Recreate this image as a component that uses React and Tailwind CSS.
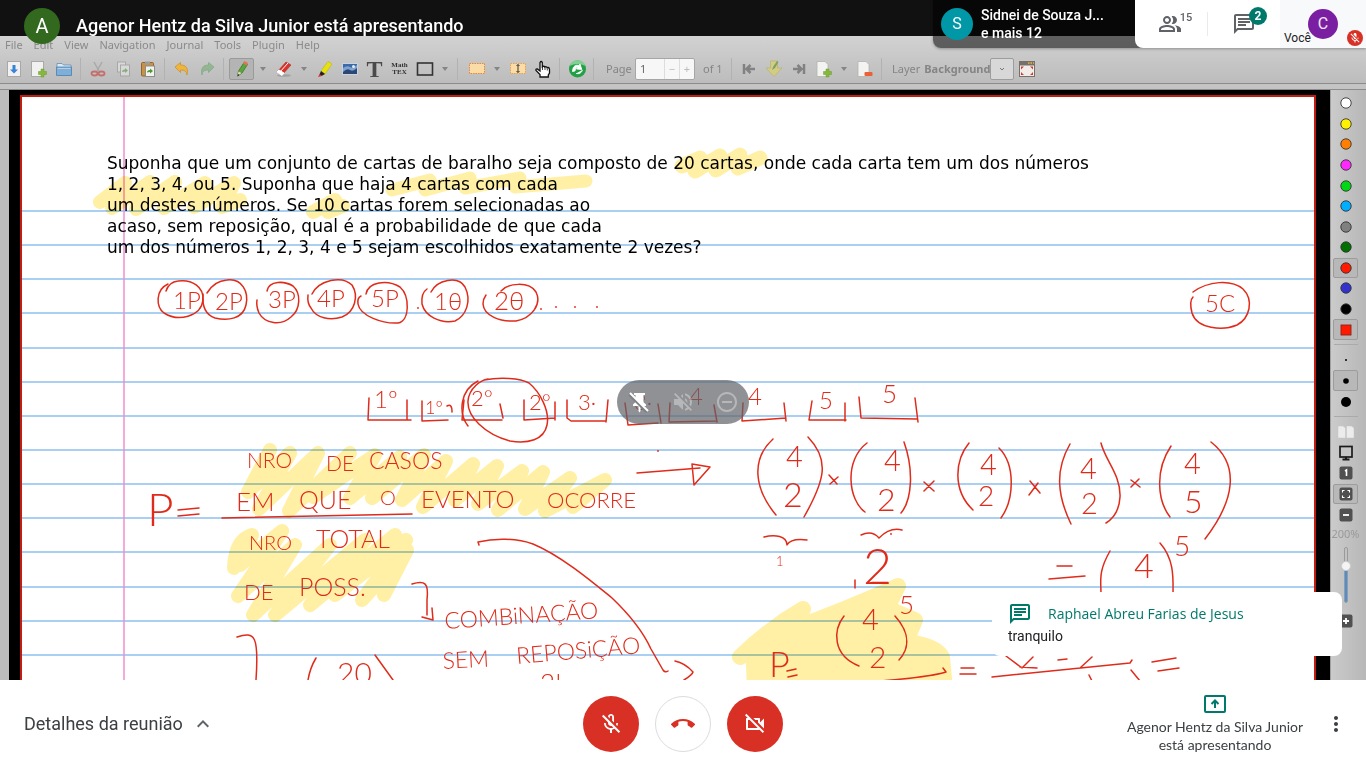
import React from "react";
import {
  MdOutlinePeopleAlt,
  MdOutlineChat,
  MdMicOff,
  MdOutlineMicOff,
  MdCallEnd,
  MdOutlineVideocamOff,
  MdMoreVert,
  MdExpandLess,
  MdVolumeOff,
  MdRemoveCircleOutline,
} from "react-icons/md";

/* ---------- toolbar pieces ---------- */

const Tool = ({ label, active, dim, children }) => (
  <button
    type="button"
    aria-label={label}
    className={
      "flex shrink-0 items-center justify-center " +
      (active
        ? "mx-px h-[22px] w-[25px] rounded-xs border border-[#9a9a9a] bg-[#b4b4b4]"
        : "h-[22px] w-[25px]") +
      (dim ? " opacity-50" : "")
    }
  >
    <svg viewBox="0 0 16 16" className="h-4 w-4 shrink-0 overflow-visible" aria-hidden="true">
      {children}
    </svg>
  </button>
);

const Caret = () => (
  <button type="button" aria-label="More" className="flex w-4 shrink-0 justify-center">
    <svg viewBox="0 0 6 4" className="h-1 w-1.5" aria-hidden="true">
      <path d="M0 0h6L3 4z" fill="#858585" />
    </svg>
  </button>
);

const Sep = () => <span className="mx-1 h-[22px] w-px shrink-0 bg-[#b2b2b2]" />;

const Sheet = ({ x = 2 }) => (
  <path d={`M${x} 0.500h8l3 3v12h-11z`} fill="#f3f3f1" stroke="#b3b3ae" strokeWidth="0.8" />
);

const Plus = () => (
  <path d="M10 8h3v2.500h2.500v3H13V16h-3v-2.500H7.500v-3H10z" fill="#86b83c" stroke="#6d9c2c" strokeWidth="0.500" />
);

function Toolbar() {
  return (
    <div className="flex h-[26px] items-center pl-px text-[11px] text-[#858585]">
      <Tool label="Save">
        <rect x="1.500" y="0.500" width="13" height="15" fill="#f1f1f1" stroke="#a8a8a8" />
        <path d="M6.500 4h3v4.500H12L8 12.500 4 8.500h2.500z" fill="#3584d6" />
      </Tool>
      <Tool label="New">
        <rect x="0.500" y="0.500" width="12" height="15" fill="#f1f1f1" stroke="#a8a8a8" />
        <Plus />
      </Tool>
      <Tool label="Open">
        <path d="M1 14V2.500h5l1.500 1.500H15v10z" fill="#dfe9f2" stroke="#5f8db5" strokeWidth="0.800" />
        <path d="M0.500 6h15v8.500h-15z" fill="#7faed6" stroke="#4e82b3" strokeWidth="0.800" />
        <path d="M1.500 7.500h13" stroke="#b3d0e8" />
      </Tool>
      <Sep />
      <Tool label="Cut">
        <path d="M4 1l5 9M12 1L7 10" stroke="#a9a9a9" strokeWidth="1.500" />
        <ellipse cx="4.500" cy="12.500" rx="3" ry="2" fill="none" stroke="#c46e6e" strokeWidth="1.800" />
        <ellipse cx="11.500" cy="12.500" rx="3" ry="2" fill="none" stroke="#c46e6e" strokeWidth="1.800" />
      </Tool>
      <Tool label="Copy" dim>
        <rect x="2.500" y="1" width="8" height="10" fill="#eee" stroke="#8c8c8c" />
        <rect x="5.500" y="4" width="9" height="11" fill="#eee" stroke="#8c8c8c" />
        <path d="M7 11q0-2.500 3-2.500V7l3 2.500-3 2.500v-1.500q-2 0-3 .5z" fill="#4b9a2f" />
      </Tool>
      <Tool label="Paste">
        <rect x="1.500" y="1.500" width="12" height="13.500" rx="1" fill="#c99146" stroke="#8f6530" />
        <rect x="5" y="0.500" width="5" height="3" fill="#9c9c9c" />
        <rect x="5.500" y="5" width="9" height="10.500" fill="#f2f2f0" stroke="#8c8c8c" />
        <path d="M7 11.500q0-2.500 3-2.500V7.500l3 2.500-3 2.500V11q-2 0-3 .5z" fill="#4b9a2f" />
      </Tool>
      <Sep />
      <Tool label="Undo">
        <path d="M1 6l5.500-4.500V4C12 4 14.500 7 13 14c-.5-4-2.500-5-6.500-5v2.500z" fill="#f0b53c" stroke="#c98c1c" strokeWidth="0.700" />
      </Tool>
      <Tool label="Redo" dim>
        <path d="M15 6L9.500 1.500V4C4 4 1.500 7 3 14c.5-4 2.500-5 6.500-5v2.500z" fill="#62ad5f" stroke="#47854a" strokeWidth="0.700" />
      </Tool>
      <Sep />
      <Tool label="Pen" active>
        <path d="M3.500 15l1-5L10 1.500l3.500 2L8 12z" fill="#58a63c" stroke="#366f22" strokeWidth="0.700" />
        <path d="M9 2.500L10.500 0l3.500 2-1.200 2.500z" fill="#e2734f" />
        <path d="M3.500 15l1-4.500L7.500 12z" fill="#ecd9ac" />
        <path d="M3.500 15.500l.5-2.500 1.500 1z" fill="#222" />
      </Tool>
      <Caret />
      <Tool label="Eraser">
        <ellipse cx="8" cy="14.500" rx="7" ry="1.300" fill="#a2a2a2" />
        <path d="M1 11L10 1l5 3-9 10z" fill="#d9332b" stroke="#a3221c" strokeWidth="0.500" />
        <path d="M3.500 11.500L12 2M1 11l2-2 5 3-2 2.500z" fill="#fff" stroke="#fff" />
      </Tool>
      <Caret />
      <Tool label="Highlighter">
        <path d="M4 10L11 0.500l4 2.500-7 10z" fill="#e8e010" stroke="#b8b000" strokeWidth="0.500" />
        <path d="M2.500 13.500L4 10l4 3-3.500 2z" fill="#222" />
        <path d="M1 16l1.500-3 2.500 2z" fill="#d33" />
      </Tool>
      <Tool label="Image">
        <rect x="0.500" y="2.500" width="15" height="11" fill="#3c6aa8" stroke="#c7d3e2" />
        <path d="M1 7q4-3 7-1t7-2v9H1z" fill="#7ea3cf" />
        <path d="M1 11q4-4 7-2t7-2v6H1z" fill="#2b4874" />
        <circle cx="11.500" cy="5.500" r="1.500" fill="#e7eef7" />
      </Tool>
      <button type="button" aria-label="Text tool" className="w-[25px] text-center font-['Liberation_Serif',serif] text-2xl leading-none font-bold text-[#4a4a4a]">T</button>
      <button type="button" aria-label="Math TEX" className="flex w-[25px] flex-col items-center font-['Liberation_Serif',serif] text-[7px] leading-[7px] font-bold text-[#333]">
        <span>Math</span>
        <span>TEX</span>
      </button>
      <Tool label="Rectangle">
        <rect x="0.500" y="2" width="15" height="12" fill="none" stroke="#333" strokeWidth="1.600" />
      </Tool>
      <Caret />
      <Sep />
      <span className="w-0.5 shrink-0" />
      <Tool label="Select rectangle">
        <rect x="0.500" y="2.500" width="15" height="10" fill="#fbdca6" stroke="#e9882c" strokeDasharray="1.500 1" />
      </Tool>
      <Caret />
      <Tool label="Vertical space">
        <rect x="0.500" y="2.500" width="15" height="10" fill="#fbdca6" stroke="#e9a054" strokeDasharray="1.500 1" />
        <path d="M8 3.500v8M6.500 5L8 3.500 9.500 5M6.500 10L8 11.500 9.500 10" fill="none" stroke="#333" strokeWidth="1" />
      </Tool>
      <Tool label="Hand">
        <path d="M5 16v-2.500L1 9.500q-.5-1.700 1.300-1.500L5 10V1.500q1.200-2 2.300 0V6l1-.8q1-.3 1.500 1l1-.5q1.200 0 1.400 1.100l1-.3q1.300.3 1.300 2V12l-1.200 2v2z" fill="#fff" stroke="#111" strokeWidth="1.300" />
        <path d="M7.500 9V6M10 9V6.500M12.300 9.500V7.500" stroke="#111" strokeWidth="0.800" />
      </Tool>
      <Sep />
      <Tool label="Default tool">
        <circle cx="8.500" cy="8" r="8.500" fill="#21a045" />
        <path d="M0.500 5a8.500 8.500 0 0 1 16 0q-8-4-16 0z" fill="#80cf93" />
        <path d="M3.500 10.500C3.500 5 7 3.500 10 4.500L11 3l1.800 5.500-5.300-.5 1.300-1.700Q6.500 6 6 10zM13.500 9Q12 13.500 7 12.500" fill="#fff" stroke="#fff" strokeWidth="0.800" />
      </Tool>
      <Sep />
      <label htmlFor="page" className="w-[37px] shrink-0 pl-2">Page</label>
      <span className="flex h-[22px] w-[60px] shrink-0 items-center rounded-xs border border-[#a6a6a6] bg-[#f7f7f7]">
        <input id="page" defaultValue="1" className="w-7 bg-transparent pl-1 text-[#666] outline-none" />
        <button type="button" aria-label="Previous page" className="h-full flex-1 border-l border-[#ddd] text-[#bbb]">−</button>
        <button type="button" aria-label="Next page" className="h-full flex-1 border-l border-[#ddd] text-[#bbb]">+</button>
      </span>
      <span className="w-8 shrink-0 pl-2 whitespace-nowrap">of 1</span>
      <Sep />
      <Tool label="First page">
        <path d="M3 3v10M14 8H6M9.500 4L5.500 8l4 4" fill="none" stroke="#828282" strokeWidth="2.500" />
      </Tool>
      <Tool label="Annotated page">
        <path d="M4.500 0h7v7H16l-8 8.500L0 7h4.500z" fill="#d3cd84" stroke="#b9b36a" strokeWidth="0.700" />
        <path d="M6 9l1-3 4-6 1.500 1L9 7z" fill="#7da163" />
      </Tool>
      <Tool label="Last page">
        <path d="M13 3v10M2 8h8M6.500 4l4 4-4 4" fill="none" stroke="#828282" strokeWidth="2.500" />
      </Tool>
      <Tool label="Add page">
        <Sheet x={1} />
        <Plus />
      </Tool>
      <Caret />
      <Tool label="Delete page">
        <Sheet x={1} />
        <rect x="7.500" y="11" width="8" height="4" rx="1" fill="#ea6037" />
      </Tool>
      <Sep />
      <span className="pl-1.5">Layer</span>
      <span className="pl-1 font-bold">Background</span>
      <button type="button" aria-label="Choose layer" className="flex h-[22px] w-6 shrink-0 items-center justify-center rounded-xs border border-[#9d9d9d] bg-[#d8d8d8]">
        <svg viewBox="0 0 6 4" className="h-1 w-1.5" aria-hidden="true">
          <path d="M1 1l2 2 2-2" fill="none" stroke="#777" />
        </svg>
      </button>
      <Tool label="Fullscreen">
        <rect x="0" y="0" width="16" height="16" fill="#75706a" />
        <rect x="1" y="4.500" width="14" height="10.500" fill="#f2ece8" />
        <path d="M9 2h1.500M11.500 2H13M14 2h1" stroke="#e9b44c" strokeWidth="1.500" />
        <path d="M2 5.500h3l-3 3zM14 5.500h-3l3 3zM2 14v-3l3 3zM14 14v-3l-3 3z" fill="#cf3b33" />
      </Tool>
    </div>
  );
}

/* ---------- right palette ---------- */

const colors = [
  ["White", "#ffffff"], ["Yellow", "#fff200"], ["Orange", "#ff8000"], ["Magenta", "#ff28ff"],
  ["Light green", "#00d816"], ["Light blue", "#00aeff"], ["Gray", "#808080"], ["Green", "#007000"],
  ["Red", "#ff1a00"], ["Blue", "#3333cc"], ["Black", "#000000"],
];

const SideButton = ({ label, active, children }) => (
  <button
    type="button"
    aria-label={label}
    className={
      "flex w-[25px] flex-1 items-center justify-center rounded-xs border " +
      (active ? "border-[#9c9c9c] bg-[#b9b8b8]" : "border-transparent")
    }
  >
    <svg viewBox="0 0 16 16" className="h-4 w-4 shrink-0" aria-hidden="true">{children}</svg>
  </button>
);

const Tile = ({ children }) => (
  <>
    <rect x="1.500" y="1.500" width="13" height="13" rx="2" fill="#505050" />
    {children}
  </>
);

function Palette() {
  return (
    <aside className="flex w-9 shrink-0 flex-col items-center border-l border-[#a0a0a0] bg-linear-to-r from-[#cccbcb] to-[#b8b7b7] pt-[3px] pr-1.5">
      <div className="flex h-[247px] shrink-0 flex-col">
        {colors.map(([name, c]) => (
          <SideButton key={name} label={name} active={name === "Red"}>
            <circle cx="8" cy="8" r="5.200" fill={c} stroke="#333" strokeWidth="0.900" />
          </SideButton>
        ))}
        <SideButton label="Pick colour" active>
          <rect x="3" y="3" width="10" height="10" fill="#ff1a00" stroke="#8a2218" strokeWidth="0.900" />
        </SideButton>
      </div>
      <span className="my-1 h-px w-6 shrink-0 bg-[#aaa]" />
      <div className="flex h-[63px] shrink-0 flex-col">
        <SideButton label="Fine"><circle cx="8" cy="8" r="1" /></SideButton>
        <SideButton label="Medium" active><circle cx="8" cy="8" r="2.800" /></SideButton>
        <SideButton label="Thick"><circle cx="8" cy="8" r="5" /></SideButton>
      </div>
      <span className="my-1 h-px w-6 shrink-0 bg-[#aaa]" />
      <div className="mt-px flex h-[103px] shrink-0 flex-col">
        <SideButton label="Paired pages">
          <path d="M0 2h5l2.500 2v10H0zM8.500 2h5L16 4v10H8.500z" fill="#ececec" stroke="#c5c5c5" strokeWidth="0.500" />
        </SideButton>
        <SideButton label="Presentation">
          <rect x="2" y="1.500" width="12" height="10.500" fill="#c6c6c6" stroke="#1a1a1a" strokeWidth="1.700" />
          <path d="M4.500 14.500h7M8 12v3" stroke="#1a1a1a" strokeWidth="2" />
        </SideButton>
        <SideButton label="Zoom 100%"><Tile><path d="M7 6l1.500-1v6" fill="none" stroke="#fff" strokeWidth="1.600" /></Tile></SideButton>
        <SideButton label="Zoom fit" active>
          <Tile><path d="M4.500 6.500v-2h2M9.500 4.500h2v2M11.500 9.500v2h-2M6.500 11.500h-2v-2" fill="none" stroke="#fff" strokeWidth="1.100" /></Tile>
        </SideButton>
        <SideButton label="Zoom out"><Tile><path d="M5 8h6" stroke="#fff" strokeWidth="1.800" /></Tile></SideButton>
      </div>
      <span className="text-[11px] leading-[18px] text-[#9a9a9a]">200%</span>
      <label className="relative mt-1 flex h-14 w-5 shrink-0 justify-center">
        <span className="flex h-full w-1 flex-col overflow-hidden rounded-full border border-[#9a9a9a]">
          <span className="h-1/3" />
          <span className="flex-1 bg-[#4a90d9]" />
        </span>
        <span className="absolute top-3.5 h-2.5 w-2.5 rounded-full border border-[#ccc] bg-[#f4f4f4]" />
        <input type="range" aria-label="Zoom" defaultValue="66" className="absolute inset-0 h-full w-full opacity-0" />
      </label>
      <div className="mt-2 flex h-5 shrink-0 flex-col">
        <SideButton label="Zoom in"><Tile><path d="M5 8h6M8 5v6" stroke="#fff" strokeWidth="1.800" /></Tile></SideButton>
      </div>
    </aside>
  );
}

/* ---------- handwritten page ---------- */

const rules = [211, 245, 279, 313, 348, 382, 416, 450, 484, 518, 552, 587, 621, 655];

const words = [
  ["1P", 173, 309, 24], ["2P", 215, 310, 24], ["3P", 268, 308, 24], ["4P", 317, 307, 24], ["5P", 371, 307, 24],
  ["1θ", 434, 310, 24], ["2θ", 494, 310, 26], ["5C", 1205, 312, 24],
  ["1º", 374, 408, 24], ["1º", 425, 414, 18], ["2°", 471, 406, 22], ["2°", 529, 410, 22], ["3·", 578, 410, 22],
  ["3·", 634, 410, 22], ["4", 689, 405, 24], ["4", 748, 405, 24], ["5", 819, 409, 24], ["5", 882, 403, 26],
  ["P", 147, 526, 46],
  ["NRO", 247, 468, 21], ["DE", 326, 471, 21], ["CASOS", 369, 469, 23],
  ["EM", 236, 511, 26], ["QUE", 299, 509, 25], ["O", 380, 505, 20], ["EVENTO", 421, 508, 24], ["OCORRE", 547, 508, 22],
  ["NRO", 249, 550, 20], ["TOTAL", 316, 548, 25], ["DE", 244, 600, 22], ["POSS.", 299, 596, 25],
  ["20", 337, 684, 30], ["2!", 540, 692, 26],
  ["COMBiNAÇÃO", 445, 629, 23, -4], ["SEM", 443, 669, 23, -3], ["REPOSiÇÃO", 517, 664, 23, -5],
  ["4", 786, 467, 29], ["2", 783, 507, 34], ["4", 884, 471, 29], ["2", 877, 511, 32],
  ["4", 980, 475, 29], ["2", 978, 506, 28], ["4", 1080, 479, 29], ["2", 1081, 514, 29],
  ["4", 1184, 474, 29], ["5", 1184, 513, 32], ["4", 1134, 578, 34], ["5", 1174, 556, 28],
  ["1", 776, 566, 13], ["2", 863, 584, 50], ["4", 862, 630, 29], ["2", 869, 668, 30], ["5", 899, 614, 26], ["P", 769, 677, 36],
];

const strokes = [
  "M168 284C155 290 156 307 164 313C178 322 201 317 203 300C204 287 192 279 178 281Q169 282 166 291",
  "M207 293Q214 281 227 280C242 278 249 292 246 305C243 319 228 321 215 318C206 315 202 306 203 294",
  "M267 291C269 280 285 281 293 286C301 293 301 309 291 317C281 326 265 324 259 313Q256 306 257 300",
  "M312 294C319 280 342 275 352 285C359 296 355 312 342 317C330 321 316 318 311 308Q307 303 308 295",
  "M366 294C368 282 387 279 400 287C410 296 410 321 398 323C383 324 360 316 358 304Q357 298 361 296",
  "M431 292C437 280 458 275 465 287C472 301 466 316 455 321C440 324 425 316 422 304Q421 293 427 289",
  "M501 291C508 283 529 281 536 292C542 304 532 318 516 321C500 322 484 316 483 304Q483 299 486 295",
  "M1193 292C1208 281 1231 279 1243 289C1254 300 1250 318 1237 325C1223 331 1197 329 1192 313Q1189 301 1193 297",
  "M369 398L368 420L411 420M407 400V420M422 401V421L448 420M447 406Q452 403 452 412",
  "M478 381C460 390 458 413 468 426M484 380C500 377 520 378 529 383C540 392 550 411 547 425C544 440 528 444 510 441C484 434 467 416 468 401C469 388 481 380 488 379",
  "M464 400L462 420L502 420M500 404L503 418M524 400V420L555 418M555 402V420",
  "M567 400V418L571 421L605 421M608 400L606 422M625 403L628 425L658 423M658 404L661 423",
  "M670 403L669 422L716 421M714 405L717 422M743 403L742 421L786 418M784 403L786 421",
  "M812 401L809 420L846 420M845 403V421M859 397L861 418L917 419M915 398L918 422",
  "M178 510L199 508M178 516L199 514M222 518Q300 516 412 514",
  "M637 473L700 468M692 464L710 467L694 485Z",
  "M412 584C425 580 429 583 427 600V615M422 617L433 620L432 608",
  "M237 637C255 631 259 636 256 680M316 658Q310 668 308 680M375 655L393 680",
  "M479 545L478 542C495 538 516 538 533 544C562 556 596 585 612 598C632 617 645 636 651 649L663 670Q665 673 668 671M675 661Q685 663 693 672Q692 675 684 680",
  "M773 439C750 460 755 490 776 515M808 437C830 460 825 480 804 517",
  "M867 443C844 460 848 500 865 512M904 442C914 470 912 500 901 513",
  "M969 443C955 460 952 490 973 510M999 448C1016 465 1014 500 1001 518",
  "M1070 444C1055 470 1057 495 1071 524M1101 443C1105 460 1121 475 1120 497Q1119 515 1106 523",
  "M1171 446C1155 470 1157 500 1170 517M1211 442C1240 465 1235 500 1205 539",
  "M829 475L837 484M838 477L830 484M924 482L934 491M934 481L924 491M1030 481L1040 493M1038 483L1029 495M1131 480L1140 487M1139 479L1131 487",
  "M1057 566H1072M1049 579L1085 576M1110 551C1098 572 1101 580 1101 595M1160 543C1175 560 1173 580 1173 595",
  "M764 537C775 534 787 536 787 545Q791 538 807 540M861 535Q872 530 879 538Q890 527 902 530M855 580V588",
  "M844 616C833 630 832 655 859 666M895 616C912 635 908 650 899 660",
  "M787 671L796 669M788 677L797 675M880 681Q930 677 946 672L943 668M961 668H974M960 674H976",
  "M1006 656L1022 668L1033 657M1020 667L1037 668M1058 660L1067 659M1092 657L1080 668M992 677L1130 663L1132 660M1152 662L1176 658M1158 671L1179 668M1131 670L1140 681M1089 675L1092 681",
];

const dots = [[418, 308], [541, 309], [556, 307], [575, 307], [597, 307], [658, 451], [891, 534]];

function Notebook() {
  return (
    <section className="relative min-w-0 flex-1 overflow-hidden border-x-2 border-t-2 border-[#c21d10] bg-white">
      <svg className="absolute inset-0 h-full w-full" aria-hidden="true">
        <g transform="translate(0 -97)">
          {rules.map((y) => (
            <line key={y} x1="0" x2="100%" y1={y} y2={y} stroke="#8cc0ef" strokeWidth="1.500" />
          ))}
        </g>
        <line x1="102" x2="102" y1="0" y2="100%" stroke="#f08fd0" strokeWidth="1.500" />
        <g transform="translate(-22 -97)">
          <g fill="none" stroke="#fff0a6" strokeLinecap="round" strokeLinejoin="round" className="mix-blend-multiply">
            <path strokeWidth="15" d="M682 166L700 158L695 171L720 156L716 170L740 155L738 168L760 158" />
            <path strokeWidth="13" d="M392 190L430 180L425 190L470 178L465 188L520 178L515 187L586 181" />
            <path strokeWidth="14" d="M100 202L125 183L112 208L150 182L136 209L175 182L164 208L205 183L194 207L234 183L222 207L240 200" />
            <path strokeWidth="14" d="M313 212L335 200L328 212L343 206" />
            <path strokeWidth="14" d="M270 450L248 492L290 453L259 509L318 453L289 511L350 453L313 497L375 455L350 498L400 457L372 498L424 455L402 500L446 461L423 507L473 464L455 500L497 466L478 504L522 471L498 510L543 472L525 509L570 478L545 511L605 480L573 507" />
            <path strokeWidth="14" d="M234 568Q235 540 252 535L240 565L282 531L238 596L295 545L253 615L330 545L275 615L365 540L310 605L395 535L335 595L406 540L362 600L407 550L384 595" />
            <path fill="#fff0a6" strokeWidth="16" d="M740 657Q770 628 803 609L790 630Q850 608 898 586L887 608L915 620L906 642Q935 645 942 657L945 690L755 690L754 665L790 632Z" />
          </g>
          <g fill="none" stroke="#e02b1a" strokeWidth="1.500" strokeLinecap="round" strokeLinejoin="round">
            {strokes.map((d) => <path key={d} d={d} />)}
          </g>
          <g fill="#e02b1a">
            {dots.map(([x, y]) => <circle key={x} cx={x} cy={y} r="0.900" />)}
          </g>
        </g>
      </svg>
      <svg className="absolute inset-0 h-full w-full" role="img" aria-label="Handwritten notes">
        <g transform="translate(-22 -97)" fill="#e02b1a" className="font-['Lato',sans-serif] font-light">
          {words.map(([t, x, y, s, r], i) => (
            <text key={i} x={x} y={y} fontSize={s} transform={r ? `rotate(${r} ${x} ${y})` : undefined}>{t}</text>
          ))}
        </g>
      </svg>
      <p className="relative pt-14 pl-[85px] font-['DejaVu_Sans',sans-serif] text-[17px] leading-[21px] whitespace-nowrap text-black">
        Suponha que um conjunto de cartas de baralho seja composto de 20 cartas, onde cada carta tem um dos números<br />
        1, 2, 3, 4, ou 5. Suponha que haja 4 cartas com cada<br />
        um destes números. Se 10 cartas forem selecionadas ao<br />
        acaso, sem reposição, qual é a probabilidade de que cada<br />
        um dos números 1, 2, 3, 4 e 5 sejam escolhidos exatamente 2 vezes?
      </p>
    </section>
  );
}

/* ---------- meeting chrome ---------- */

function Participants() {
  return (
    <div className="flex h-12 rounded-bl-lg bg-black/55 shadow-[0_1px_3px_rgba(0,0,0,0.3)]">
      <div className="flex w-[202px] items-center gap-2 pl-2 text-sm leading-[18px] font-medium text-white">
        <span className="flex h-8 w-8 items-center justify-center rounded-full bg-[#0097a7] text-base font-normal">S</span>
        <span>Sidnei de Souza J...<br />e mais 12</span>
      </div>
      <div className="flex items-center rounded-bl-lg bg-white text-[#5f6368]">
        <button type="button" aria-label="Participantes" className="flex h-full w-[72px] items-center justify-center pl-2">
          <MdOutlinePeopleAlt className="h-6 w-6" />
          <span className="-ml-0.5 pb-3 text-[11px] font-medium">15</span>
        </button>
        <span className="h-6 w-px bg-[#e8eaed]" />
        <button type="button" aria-label="Chat" className="relative flex h-full w-[72px] items-center justify-center">
          <MdOutlineChat className="h-6 w-6" />
          <span className="absolute top-[7px] right-[13px] flex h-[18px] w-[18px] items-center justify-center rounded-full bg-[#00796b] text-xs font-bold text-white">2</span>
        </button>
        <div className="relative flex h-full w-[86px] items-center justify-center bg-[#f8f9fa]">
          <span className="flex h-[30px] w-[30px] items-center justify-center rounded-full bg-[#7b1fa2] text-base text-white/90">C</span>
          <span className="absolute bottom-0.5 left-1 text-xs text-[#202124]">Você</span>
          <span className="absolute right-[3px] bottom-0.5 flex h-4 w-4 items-center justify-center rounded-full bg-[#d93025]">
            <MdMicOff className="h-3 w-3 text-white" />
          </span>
        </div>
      </div>
    </div>
  );
}

function StageControls() {
  return (
    <div className="absolute top-[380px] left-1/2 flex h-11 w-[132px] -translate-x-1/2 items-center justify-around rounded-full bg-[#5f6368]/70 text-white">
      <button type="button" aria-label="Liberar">
        <svg viewBox="0 0 24 24" className="h-6 w-6" aria-hidden="true">
          <path d="M7 3h11v2h-1.500v7l2.500 2.500V16h-5.500v5l-1 1.500-1-1.500v-5H6v-1.500L8.500 12V5H7z" fill="currentColor" />
          <path d="M2.500 4.500L20 22" stroke="#7d8083" strokeWidth="3" />
          <path d="M3 3l18 18" stroke="currentColor" strokeWidth="2" />
        </svg>
      </button>
      <button type="button" aria-label="Silenciar" className="opacity-35"><MdVolumeOff className="h-6 w-6" /></button>
      <button type="button" aria-label="Remover" className="opacity-35"><MdRemoveCircleOutline className="h-6 w-6" /></button>
    </div>
  );
}

function ChatToast() {
  return (
    <div className="absolute right-6 bottom-6 h-16 w-[350px] rounded-lg bg-white pt-2.5 pl-4">
      <div className="flex items-center gap-4 leading-[22px] text-[#00796b]">
        <MdOutlineChat className="h-6 w-6" />
        <span className="font-['Open_Sans',sans-serif] text-sm font-medium">Raphael Abreu Farias de Jesus</span>
      </div>
      <p className="text-sm leading-5 text-[#202124]">tranquilo</p>
    </div>
  );
}

export default function App() {
  return (
    <div className="flex h-screen flex-col overflow-hidden bg-white font-['Roboto',sans-serif]">
      <main className="relative flex min-h-0 flex-1 flex-col overflow-hidden">
        <header className="relative z-10 flex h-9 shrink-0 items-start gap-4 bg-[#111] pt-2 pl-6 text-white">
          <span className="flex h-9 w-9 shrink-0 items-center justify-center rounded-full bg-[#33691e] text-xl">A</span>
          <h1 className="text-lg leading-9 font-medium">Agenor Hentz da Silva Junior está apresentando</h1>
        </header>
        <div className="h-[54px] shrink-0 bg-linear-to-b from-[#d2d2d2] to-[#b9b9b9] font-['Noto_Sans',sans-serif]">
          <nav className="flex h-5 items-center gap-[11px] pb-0.5 pl-[5px] text-[11px] text-[#8a8a8a]">
            {["File", "Edit", "View", "Navigation", "Journal", "Tools", "Plugin", "Help"].map((m) => (
              <button type="button" key={m}>{m}</button>
            ))}
          </nav>
          <Toolbar />
          <div className="mt-px h-[7px] border-t border-b border-[#8c8c8c] bg-[#c4c4c4]" />
        </div>
        <div className="flex min-h-0 flex-1 font-['Noto_Sans',sans-serif]">
          <span className="w-[9px] shrink-0 bg-[#bdbdbd]" />
          <div className="flex min-w-0 flex-1 bg-black pt-[5px] pr-3.5 pl-[11px]">
            <Notebook />
          </div>
          <Palette />
        </div>
        <div className="absolute top-0 right-0 z-20">
          <Participants />
        </div>
        <StageControls />
        <ChatToast />
      </main>
      <footer className="grid h-[88px] shrink-0 grid-cols-[1fr_auto_1fr] items-center bg-white text-[#3c4043]">
        <button type="button" className="flex items-center gap-2 justify-self-start pl-6 text-lg">
          Detalhes da reunião
          <MdExpandLess className="h-6 w-6 text-[#5f6368]" />
        </button>
        <div className="flex gap-4">
          <button type="button" aria-label="Ativar microfone" className="flex h-14 w-14 items-center justify-center rounded-full bg-[#d93025] text-white">
            <MdOutlineMicOff className="h-6 w-6" />
          </button>
          <button type="button" aria-label="Sair da chamada" className="flex h-14 w-14 items-center justify-center rounded-full border border-[#dadce0] text-[#d93025]">
            <MdCallEnd className="h-6 w-6" />
          </button>
          <button type="button" aria-label="Ativar câmera" className="flex h-14 w-14 items-center justify-center rounded-full bg-[#d93025] text-white">
            <MdOutlineVideocamOff className="h-6 w-6" />
          </button>
        </div>
        <div className="flex items-center gap-[23px] justify-self-end pr-[18px]">
          <button type="button" className="flex w-[172px] flex-col items-center gap-1 text-center leading-[18px]">
            <svg viewBox="0 0 24 20" className="h-5 w-6" aria-hidden="true">
              <rect x="2" y="2" width="20" height="16" rx="1" fill="none" stroke="#00796b" strokeWidth="2" />
              <path d="M12 14V7M8.500 10L12 6.500l3.500 3.500" fill="none" stroke="#00796b" strokeWidth="2" />
            </svg>
            <span className="font-['Lato',sans-serif] text-sm leading-[18px] whitespace-nowrap">Agenor Hentz da Silva Junior<br />está apresentando</span>
          </button>
          <button type="button" aria-label="Mais opções"><MdMoreVert className="h-6 w-6" /></button>
        </div>
      </footer>
    </div>
  );
}
